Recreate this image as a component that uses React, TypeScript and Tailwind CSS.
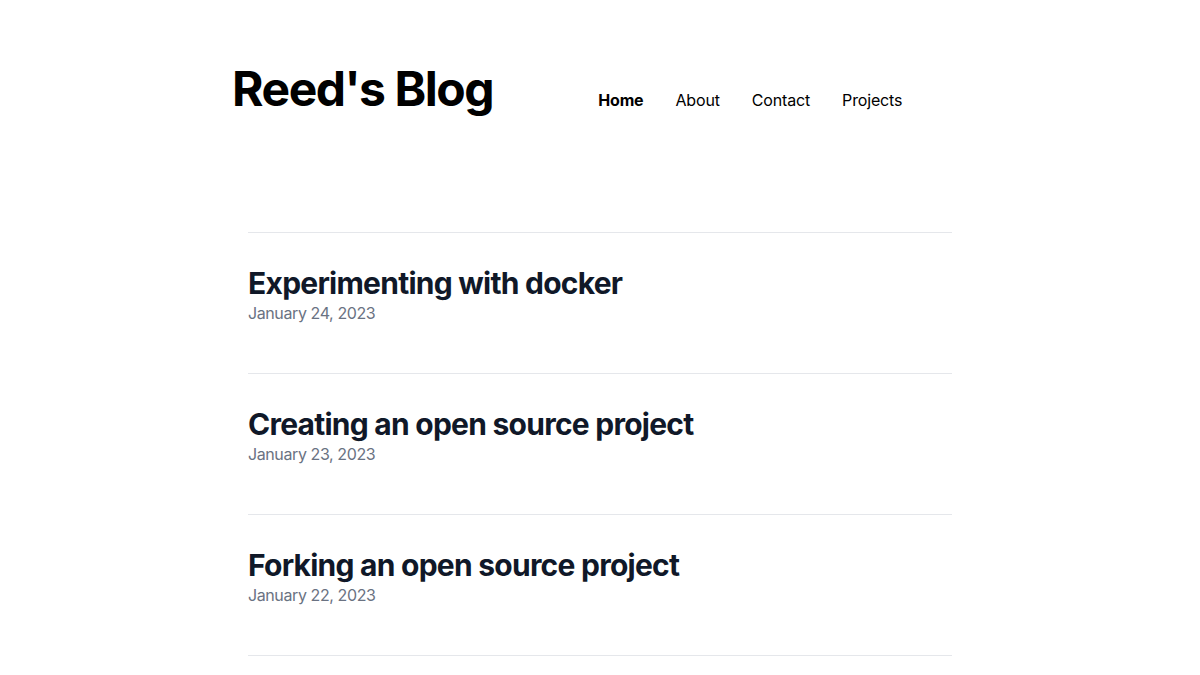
import React from "react";

const posts = [
  { title: "Experimenting with docker", date: "January 24, 2023" },
  { title: "Creating an open source project", date: "January 23, 2023" },
  { title: "Forking an open source project", date: "January 22, 2023" },
];

export default function App() {
  return (
    <div className="min-h-screen bg-white text-black" style={{ fontFamily: "Inter, 'Noto Sans', sans-serif" }}>
      <header className="mx-auto flex w-[736px] items-baseline pt-[65px]">
        <h1 className="text-5xl font-bold leading-none tracking-[-0.03em]">Reed's Blog</h1>
        <nav className="ml-[105px] flex gap-8 text-base tracking-[-0.01em]">
          <a className="font-bold">Home</a>
          <a>About</a>
          <a>Contact</a>
          <a>Projects</a>
        </nav>
      </header>
      <main className="mx-auto mt-[119px] w-[704px] border-b border-gray-200">
        {posts.map((p) => (
          <article key={p.title} className="border-t border-gray-200 pt-8 pb-12">
            <h2 className="text-3xl font-bold tracking-tight text-gray-900">{p.title}</h2>
            <p className="text-base tracking-[-0.025em] text-gray-500">{p.date}</p>
          </article>
        ))}
      </main>
    </div>
  );
}
